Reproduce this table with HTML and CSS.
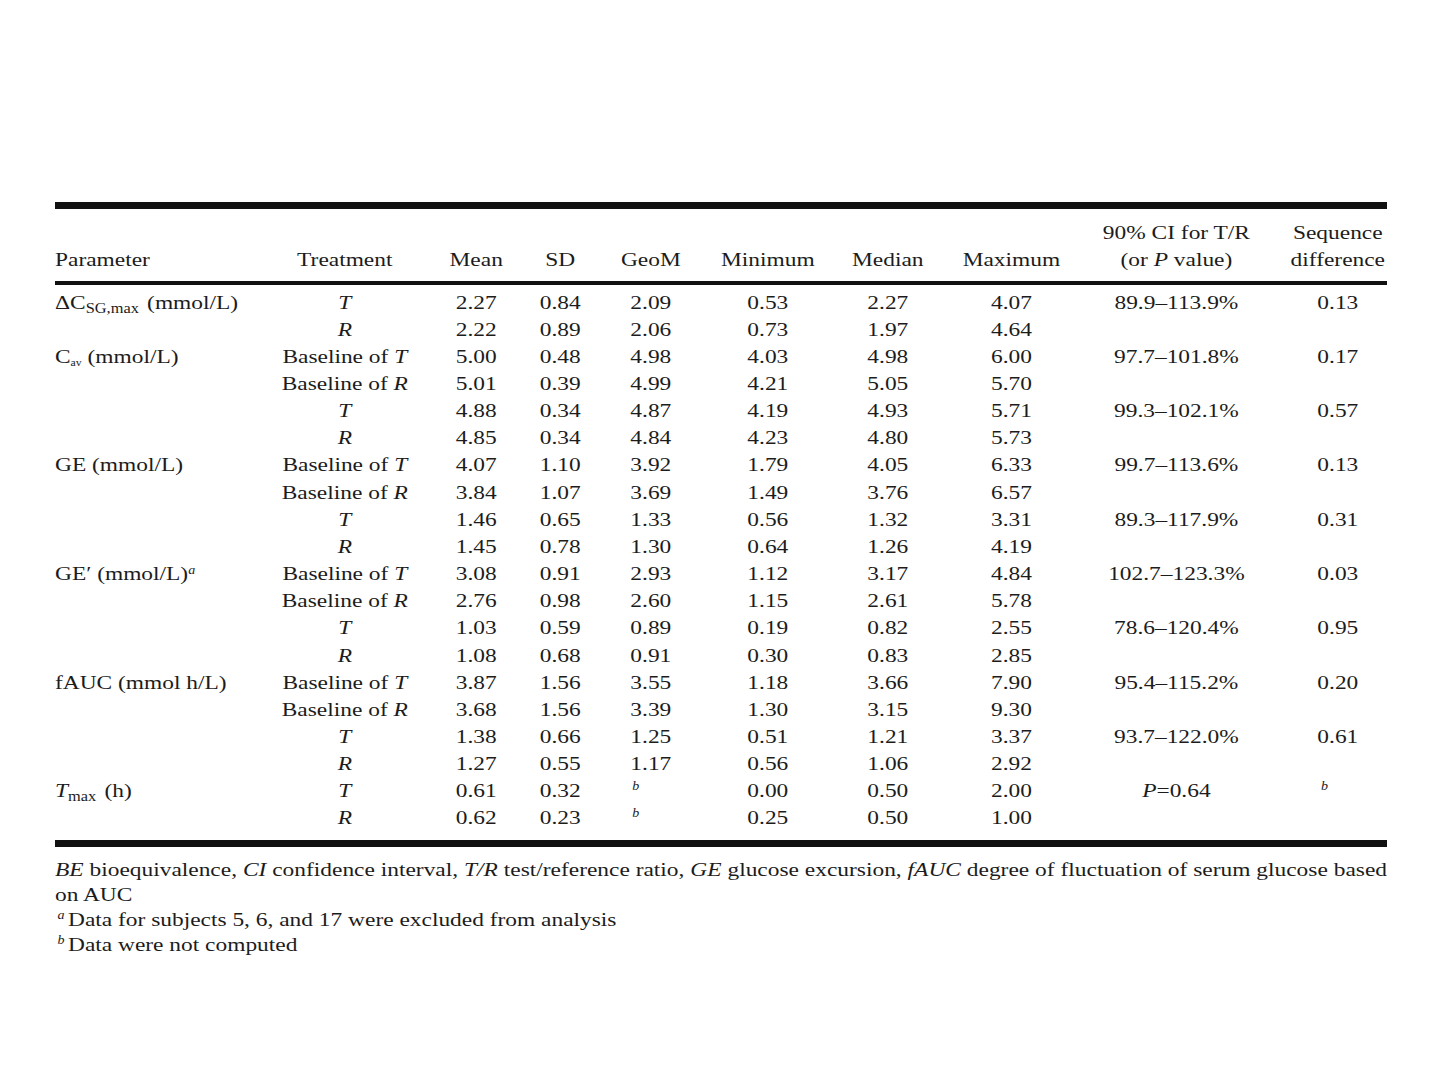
FILE: index.html
```html
<!DOCTYPE html>
<html lang="en">
<head>
<meta charset="utf-8">
<title>Table</title>
<link rel="stylesheet" href="styles.css">
</head>
<body>
<div class="page">
  <table class="data">
    <colgroup>
      <col class="c-param"><col class="c-treat"><col class="c-mean"><col class="c-sd"><col class="c-geom">
      <col class="c-min"><col class="c-med"><col class="c-max"><col class="c-ci"><col class="c-seq">
    </colgroup>
    <thead>
      <tr>
        <th class="left">Parameter</th>
        <th>Treatment</th>
        <th>Mean</th>
        <th>SD</th>
        <th>GeoM</th>
        <th>Minimum</th>
        <th>Median</th>
        <th>Maximum</th>
        <th>90% CI for T/R<br>(or <i>P</i> value)</th>
        <th>Sequence<br>difference</th>
      </tr>
      <tr class="rule"><td colspan="10"></td></tr>
    </thead>
    <tbody>
      <tr class="first"><td class="left">ΔC<sub>SG,max</sub> (mmol/L)</td><td><i>T</i></td><td>2.27</td><td>0.84</td><td>2.09</td><td>0.53</td><td>2.27</td><td>4.07</td><td>89.9–113.9%</td><td>0.13</td></tr>
      <tr><td></td><td><i>R</i></td><td>2.22</td><td>0.89</td><td>2.06</td><td>0.73</td><td>1.97</td><td>4.64</td><td></td><td></td></tr>
      <tr><td class="left">C<sub class="small">av</sub> (mmol/L)</td><td>Baseline of <i>T</i></td><td>5.00</td><td>0.48</td><td>4.98</td><td>4.03</td><td>4.98</td><td>6.00</td><td>97.7–101.8%</td><td>0.17</td></tr>
      <tr><td></td><td>Baseline of <i>R</i></td><td>5.01</td><td>0.39</td><td>4.99</td><td>4.21</td><td>5.05</td><td>5.70</td><td></td><td></td></tr>
      <tr><td></td><td><i>T</i></td><td>4.88</td><td>0.34</td><td>4.87</td><td>4.19</td><td>4.93</td><td>5.71</td><td>99.3–102.1%</td><td>0.57</td></tr>
      <tr><td></td><td><i>R</i></td><td>4.85</td><td>0.34</td><td>4.84</td><td>4.23</td><td>4.80</td><td>5.73</td><td></td><td></td></tr>
      <tr><td class="left">GE (mmol/L)</td><td>Baseline of <i>T</i></td><td>4.07</td><td>1.10</td><td>3.92</td><td>1.79</td><td>4.05</td><td>6.33</td><td>99.7–113.6%</td><td>0.13</td></tr>
      <tr><td></td><td>Baseline of <i>R</i></td><td>3.84</td><td>1.07</td><td>3.69</td><td>1.49</td><td>3.76</td><td>6.57</td><td></td><td></td></tr>
      <tr><td></td><td><i>T</i></td><td>1.46</td><td>0.65</td><td>1.33</td><td>0.56</td><td>1.32</td><td>3.31</td><td>89.3–117.9%</td><td>0.31</td></tr>
      <tr><td></td><td><i>R</i></td><td>1.45</td><td>0.78</td><td>1.30</td><td>0.64</td><td>1.26</td><td>4.19</td><td></td><td></td></tr>
      <tr><td class="left">GE′ (mmol/L)<sup><i>a</i></sup></td><td>Baseline of <i>T</i></td><td>3.08</td><td>0.91</td><td>2.93</td><td>1.12</td><td>3.17</td><td>4.84</td><td>102.7–123.3%</td><td>0.03</td></tr>
      <tr><td></td><td>Baseline of <i>R</i></td><td>2.76</td><td>0.98</td><td>2.60</td><td>1.15</td><td>2.61</td><td>5.78</td><td></td><td></td></tr>
      <tr><td></td><td><i>T</i></td><td>1.03</td><td>0.59</td><td>0.89</td><td>0.19</td><td>0.82</td><td>2.55</td><td>78.6–120.4%</td><td>0.95</td></tr>
      <tr><td></td><td><i>R</i></td><td>1.08</td><td>0.68</td><td>0.91</td><td>0.30</td><td>0.83</td><td>2.85</td><td></td><td></td></tr>
      <tr><td class="left">fAUC (mmol h/L)</td><td>Baseline of <i>T</i></td><td>3.87</td><td>1.56</td><td>3.55</td><td>1.18</td><td>3.66</td><td>7.90</td><td>95.4–115.2%</td><td>0.20</td></tr>
      <tr><td></td><td>Baseline of <i>R</i></td><td>3.68</td><td>1.56</td><td>3.39</td><td>1.30</td><td>3.15</td><td>9.30</td><td></td><td></td></tr>
      <tr><td></td><td><i>T</i></td><td>1.38</td><td>0.66</td><td>1.25</td><td>0.51</td><td>1.21</td><td>3.37</td><td>93.7–122.0%</td><td>0.61</td></tr>
      <tr><td></td><td><i>R</i></td><td>1.27</td><td>0.55</td><td>1.17</td><td>0.56</td><td>1.06</td><td>2.92</td><td></td><td></td></tr>
      <tr><td class="left"><i>T</i><sub>max</sub> (h)</td><td><i>T</i></td><td>0.61</td><td>0.32</td><td><span class="nc nc-geom"><i>b</i></span></td><td>0.00</td><td>0.50</td><td>2.00</td><td><i>P</i>=0.64</td><td><span class="nc nc-seq"><i>b</i></span></td></tr>
      <tr class="last"><td></td><td><i>R</i></td><td>0.62</td><td>0.23</td><td><span class="nc nc-geom"><i>b</i></span></td><td>0.25</td><td>0.50</td><td>1.00</td><td></td><td></td></tr>
    </tbody>
  </table>
  <div class="notes">
    <p class="abbr"><i>BE</i> bioequivalence, <i>CI</i> confidence interval, <i>T/R</i> test/reference ratio, <i>GE</i> glucose excursion, <i>fAUC</i> degree of fluctuation of serum glucose based on AUC</p>
    <p><sup><i>a</i></sup>Data for subjects 5, 6, and 17 were excluded from analysis</p>
    <p><sup><i>b</i></sup>Data were not computed</p>
  </div>
</div>
</body>
</html>
```

FILE: styles.css
```css
html, body {
  margin: 0;
  padding: 0;
  background: #ffffff;
}

body {
  font-family: "Liberation Serif", "Times New Roman", serif;
  font-size: 19.5px;
  color: #1c1c1c;
}

.page {
  width: 1110px;
  margin-left: 55px;
  padding-top: 202px;
  transform: scaleX(1.2);
  transform-origin: 0 0;
}

.data {
  width: 1110px;
  table-layout: fixed;
  border-collapse: separate;
  border-spacing: 0;
  border-top: 7px solid #111111;
  border-bottom: 7px solid #111111;
}

.c-param { width: 183px; }
.c-treat { width: 117px; }
.c-mean { width: 102px; }
.c-sd { width: 38px; }
.c-geom { width: 113px; }
.c-min { width: 82px; }
.c-med { width: 118px; }
.c-max { width: 88px; }
.c-ci { width: 187px; }
.c-seq { width: 82px; }

.data th {
  font-weight: normal;
  text-align: center;
  vertical-align: bottom;
  line-height: 27px;
  padding: 9.5px 0 8.5px 0;
  white-space: nowrap;
}

.data tr.rule td {
  height: 4px;
  line-height: 0;
  padding: 0;
  background: #111111;
}

.data tbody td {
  text-align: center;
  line-height: 27.16px;
  height: 27.16px;
  padding: 0;
  white-space: nowrap;
}

.data .left {
  text-align: left;
}

.data tr.first td {
  padding-top: 3.5px;
}

.data tr.last td {
  padding-bottom: 8px;
}

sub {
  font-size: 0.7em;
  line-height: 0;
  vertical-align: -0.3em;
  margin-right: 2px;
}

sub.small {
  font-size: 0.5em;
  margin-right: 0;
}

sup {
  font-size: 0.6em;
  line-height: 0;
  vertical-align: 0.55em;
}

.nc {
  display: inline-block;
  font-size: 0.6em;
  line-height: 0;
  vertical-align: 0.6em;
}

.nc-geom {
  margin-right: 25px;
}

.nc-seq {
  margin-right: 22px;
}

.notes {
  margin-top: 10px;
}

.notes p {
  margin: 0;
  line-height: 25px;
}

.notes p sup {
  margin-left: 2px;
  margin-right: 3px;
}

.notes .abbr {
  text-align: justify;
}
```
